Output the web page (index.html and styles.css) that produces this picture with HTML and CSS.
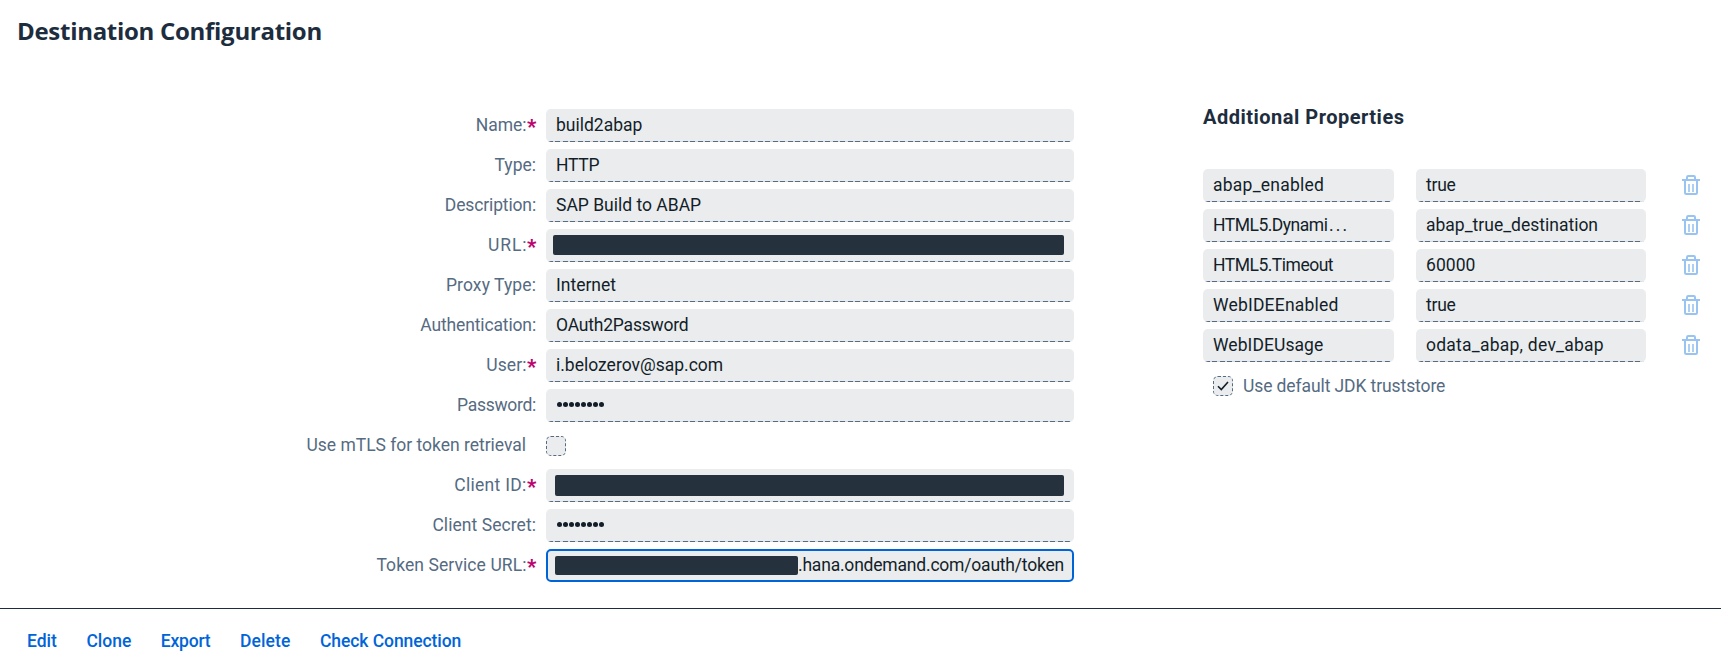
FILE: index.html
```html
<!DOCTYPE html>
<html lang="en">
<head>
<meta charset="utf-8">
<title>Destination Configuration</title>
<link rel="stylesheet" href="styles.css">
</head>
<body>
<svg class="defs" width="0" height="0" aria-hidden="true">
  <symbol id="trash" viewBox="0 0 18 20">
    <path d="M0 5H18M5 5V2.2Q5 1 6.2 1H11.8Q13 1 13 2.2V5M3 5V17.8Q3 19 4.2 19H13.8Q15 19 15 17.8V5" fill="none" stroke="#99c3f1" stroke-width="2"/>
    <path d="M7 9V17M11 9V17" fill="none" stroke="#a5caf3" stroke-width="1.8"/>
  </symbol>
</svg>
<header class="page-header"><h1 class="title">Destination Configuration</h1></header>
<main class="content">
  <form class="form">
    <label class="label required"><span class="t-name">Name:</span></label><div class="field">build2abap</div>
    <label class="label">Type:</label><div class="field t-http">HTTP</div>
    <label class="label t-desc">Description:</label><div class="field">SAP Build to ABAP</div>
    <label class="label required"><span class="t-url">URL:</span></label><div class="field field-url"><span class="redacted"></span></div>
    <label class="label t-proxy">Proxy Type:</label><div class="field">Internet</div>
    <label class="label t-auth">Authentication:</label><div class="field t-oauth">OAuth2Password</div>
    <label class="label required"><span class="t-proxy">User:</span></label><div class="field">i.belozerov@sap.com</div>
    <label class="label t-pass">Password:</label><div class="field"><span class="dots"><i></i><i></i><i></i><i></i><i></i><i></i><i></i><i></i></span></div>
    <label class="label label-check">Use mTLS for token retrieval</label><div class="check-cell"><span class="checkbox"></span></div>
    <label class="label required"><span class="t-client">Client ID:</span></label><div class="field field-client"><span class="redacted"></span></div>
    <label class="label t-secret">Client Secret:</label><div class="field"><span class="dots"><i></i><i></i><i></i><i></i><i></i><i></i><i></i><i></i></span></div>
    <label class="label required"><span class="t-token">Token Service URL:</span></label><div class="field field-token"><span class="redacted"></span><span class="token-text">.hana.ondemand.com/oauth/token</span></div>
  </form>
  <section class="extras">
    <h2 class="subtitle">Additional Properties</h2>
    <div class="props">
      <div class="field t-enabled">abap_enabled</div><div class="field t-true">true</div><svg class="trash"><use href="#trash"/></svg>
      <div class="field t-html">HTML5.Dynami<span class="ellipsis">...</span></div><div class="field">abap_true_destination</div><svg class="trash"><use href="#trash"/></svg>
      <div class="field t-timeout">HTML5.Timeout</div><div class="field t-num">60000</div><svg class="trash"><use href="#trash"/></svg>
      <div class="field t-web">WebIDEEnabled</div><div class="field t-true">true</div><svg class="trash"><use href="#trash"/></svg>
      <div class="field t-usage">WebIDEUsage</div><div class="field t-odata">odata_abap, dev_abap</div><svg class="trash"><use href="#trash"/></svg>
    </div>
    <label class="truststore"><span class="checkbox"><svg width="18" height="18" viewBox="0 0 18 18"><path d="M4 9.3L7.3 12.6L14 5" fill="none" stroke="#131e29" stroke-width="1.6"/></svg></span><span>Use default JDK truststore</span></label>
  </section>
</main>
<footer class="actions">
  <a>Edit</a><a>Clone</a><a class="t-export">Export</a><a class="t-delete">Delete</a><a class="t-check">Check Connection</a>
</footer>
</body>
</html>
```
FILE: styles.css
```css
* { box-sizing: border-box; }
body {
  margin: 0;
  height: 671px;
  display: flex;
  flex-direction: column;
  overflow: hidden;
  background: #fff;
  color: #131e29;
  font: 17.5px/32px Roboto, sans-serif;
}
.defs { position: absolute; }
.page-header { height: 109px; padding: 14px 0 0 17px; }
.title { margin: 0; color: #1d2d3e; font: 700 24px/33px "Open Sans", sans-serif; letter-spacing: -.29px; }
.content { flex: 1; display: flex; }
.form { display: grid; grid-template-columns: 536px 528px; column-gap: 10px; grid-auto-rows: 33px; row-gap: 7px; align-content: start; width: 1203px; }
.label { color: #556b82; text-align: right; white-space: nowrap; }
.label-check { padding-right: 10px; letter-spacing: -.02px; }
.required { display: flex; justify-content: flex-end; }
.required::after { content: "*"; width: 9px; padding-left: .5px; color: #ba066c; font-weight: 900; font-size: 20px; line-height: 36px; text-align: left; }
.field {
  display: flex;
  height: 33px;
  padding: 0 10px 1px 10px;
  border-radius: 5px;
  white-space: nowrap;
  background: repeating-linear-gradient(90deg, #556b82 0 5px, #d6dade 5px 7.5px) 2px 100% / calc(100% - 4px) 1px no-repeat, #eaecee;
}
.redacted { display: block; flex: none; background: #25313d; border-radius: 2px; }
.field-url { padding: 6px 10px 0 7px; }
.field-url .redacted { width: 511px; height: 20px; }
.field-client { padding: 6px 10px 0 9px; }
.field-client .redacted { width: 509px; height: 21px; }
.field-token { padding: 0 0 0 7px; border: 2px solid #0064d9; background: #eaecee; line-height: 28px; }
.field-token .redacted { width: 243px; height: 19px; margin-top: 5px; }
.token-text { letter-spacing: -.2px; }
.dots { display: flex; gap: 1px; padding: 13px 0 0 1px; }
.dots i { width: 5px; height: 5px; border-radius: 50%; background: #131e29; }
.check-cell { padding-top: 7px; }
.checkbox { display: block; width: 20px; height: 20px; flex: none; border: 1px dashed #556b82; border-radius: 5px; background: #eaecee; }
.checkbox svg { display: block; }
.subtitle { margin: 0; padding-top: 1px; height: 60px; color: #1d2d3e; font: 700 20px/15px Roboto, sans-serif; letter-spacing: .5px; }
.props { display: grid; grid-template-columns: 191px 230px 18px; column-gap: 22px; grid-auto-rows: 33px; row-gap: 7px; }
.trash { width: 18px; height: 20px; margin: 6px 0 0 14px; }
.truststore { display: flex; gap: 10px; padding: 14px 0 0 10px; color: #556b82; line-height: 20px; letter-spacing: -.1px; }
.actions { height: 63px; display: flex; gap: 29.5px; padding: 16px 0 0 27px; border-top: 1px solid #1d2d3e; color: #0064d9; font-weight: 500; white-space: nowrap; }
.t-name { letter-spacing: -.03px; }
.t-http, .t-true { letter-spacing: -.25px; }
.t-desc { letter-spacing: -.14px; }
.t-url { letter-spacing: .9px; margin-right: -.9px; }
.t-proxy { letter-spacing: .09px; }
.t-auth { letter-spacing: -.14px; }
.t-oauth { letter-spacing: -.2px; }
.t-pass { letter-spacing: -.29px; }
.t-client { letter-spacing: .28px; }
.t-secret { letter-spacing: .06px; }
.t-token { letter-spacing: .08px; }
.t-enabled { letter-spacing: .24px; }
.t-html { letter-spacing: -.5px; }
.ellipsis { letter-spacing: 2.2px; margin-left: 1.5px; }
.t-timeout { letter-spacing: -.5px; }
.t-web { letter-spacing: .2px; }
.t-usage { letter-spacing: .07px; }
.t-num { letter-spacing: .05px; }
.t-odata { letter-spacing: .24px; }
.t-export { letter-spacing: -.21px; }
.t-delete { letter-spacing: .11px; }
.t-check { letter-spacing: -.07px; }
```
